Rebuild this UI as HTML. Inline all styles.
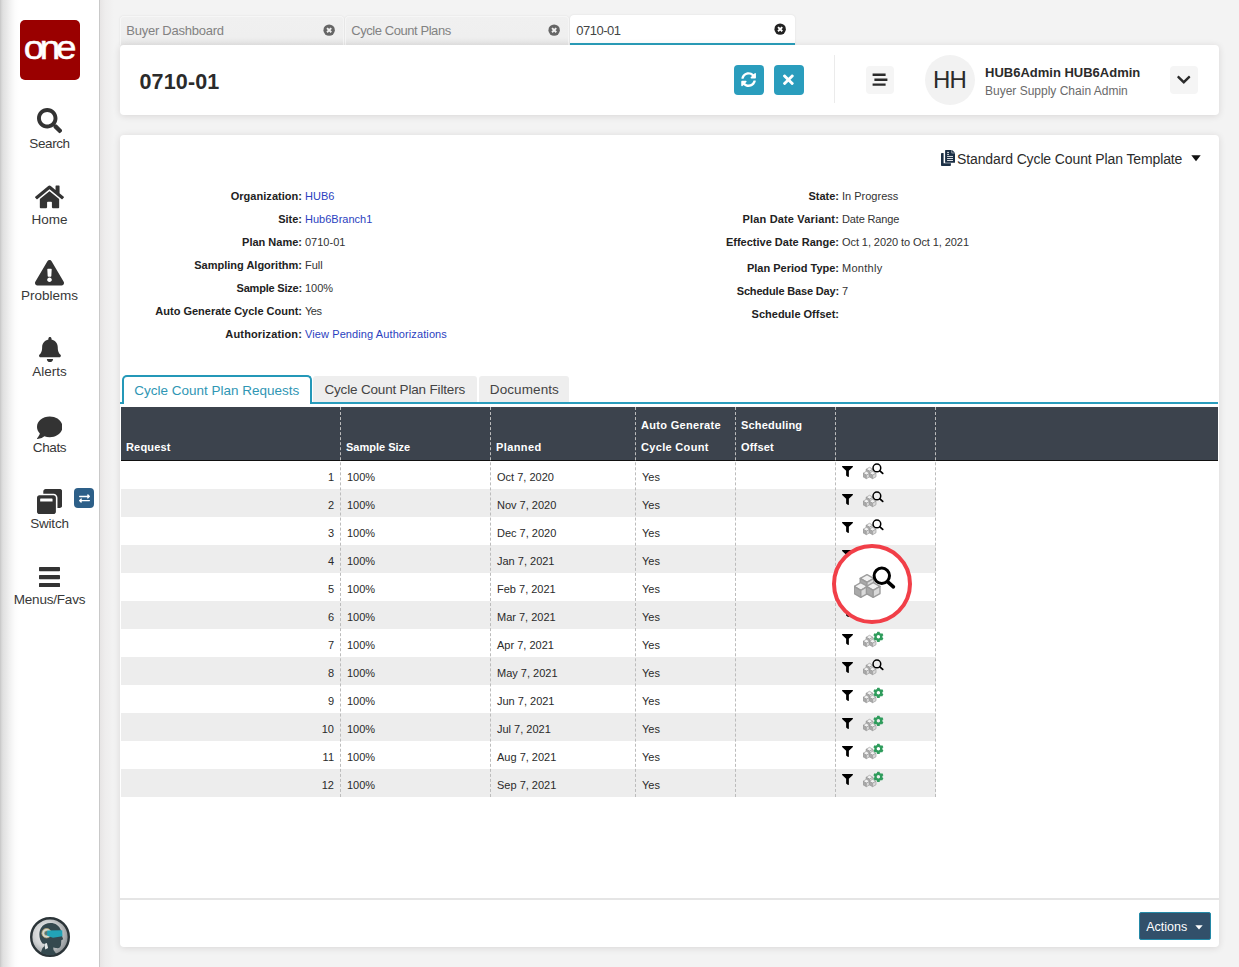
<!DOCTYPE html>
<html lang="en">
<head>
<meta charset="utf-8">
<title>0710-01</title>
<style>
*{box-sizing:border-box;margin:0;padding:0}
html,body{width:1239px;height:967px;overflow:hidden}
body{position:relative;background:#f3f3f3;font-family:"Liberation Sans",sans-serif;color:#333;font-size:12px}
.abs{position:absolute}
/* sidebar */
#side{position:absolute;left:0;top:0;width:100px;height:967px;background:linear-gradient(to right,#c6c6c6 0,#d6d6d6 1.500px,#e0e0e0 3px,#e7e7e7 6px,#efefef 9px,#f6f6f6 12px,#fcfcfc 15px,#fff 19px);border-right:1px solid #c9c9c9}
#sideshadow{position:absolute;left:100px;top:0;width:20px;height:967px;background:linear-gradient(to right,#e7e5e5 0,#eeeded 5px,#f3f3f3 14px)}
#logo{position:absolute;left:20px;top:20px;width:60px;height:60px;border-radius:5px;background:#9a0000;color:#fff;text-align:center}
#logo span{position:absolute;left:0;width:60px;top:9px;font-size:34px;letter-spacing:-4.050px;line-height:36px;text-indent:-4px;-webkit-text-stroke:.5px #fff;transform:scaleX(1.085);transform-origin:30px 50%}
.nav{position:absolute;left:0;width:99px;text-align:center;font-size:13.500px;color:#383838;line-height:16px;white-space:nowrap}
.nav svg{position:absolute}
/* top tabs */
.ttab{position:absolute;top:15.500px;height:29.500px;letter-spacing:-.25px;background:linear-gradient(to bottom,#f0f0f0 0,#efefef 70%,#e6e6e6 100%);border-radius:4px 4px 0 0;font-size:13px;color:#828282;line-height:28px;padding-left:5.300px;box-shadow:0 0 2px rgba(0,0,0,.10);border:1px solid #f6f6f6;border-bottom:none}
.ttab.act{top:15px;height:30px;background:#fff;color:#444;border:none;border-bottom:2px solid #2a9fbc;line-height:31px;padding-left:6.300px;letter-spacing:-.5px}.ttab.act .x{right:8.900px;top:8.100px}
.ttab .x{position:absolute;right:7.900px;top:7.600px;width:12.300px;height:12.300px}
/* cards */
.card{position:absolute;background:#fff;border-radius:4px;box-shadow:0 1px 7px rgba(40,20,20,.13)}
#title{position:absolute;left:139.500px;top:68px;font-size:21.500px;font-weight:bold;color:#2b2b2b;line-height:28px;letter-spacing:.15px;white-space:nowrap}
.btn{position:absolute;top:65px;width:30px;height:30px;border-radius:4px;background:#2a9dbd}
.gbtn{position:absolute;width:29px;height:29px;border-radius:4px;background:#f5f5f5}
/* form */
.lbl{position:absolute;font-weight:bold;font-size:11px;color:#222;text-align:right;line-height:14px;white-space:nowrap}
.val{position:absolute;font-size:11px;color:#333;line-height:14px;white-space:nowrap}
.val.lnk{color:#2b3fc0}
/* inner tabs */
.itab{position:absolute;top:376px;height:26px;background:#eeeeee;border-radius:3px 3px 0 0;font-size:13.500px;color:#444;line-height:28px;text-align:center;white-space:nowrap}
.itab.act{top:375px;background:#fff;color:#2f96b4;border:2px solid #2498b8;border-bottom:none;height:29px;line-height:27px;border-radius:5px 5px 0 0}
/* grid */
#ghead{position:absolute;left:121px;top:407px;width:1097px;height:54px;background:#3c434d;border-bottom:1px solid #111}
.th{position:absolute;color:#fff;font-weight:bold;font-size:11px;line-height:22px;white-space:nowrap}
.row{position:absolute;left:121px;width:815px;height:28px}
.row.alt{background:#ededed}
.c{position:absolute;top:9px;font-size:11px;line-height:14px;color:#2a2a2a;white-space:nowrap}
.vl{position:absolute;top:407px;width:0;height:390px;border-left:1px dashed #bcbcbc}
.ic{position:absolute}
</style>
</head>
<body>
<div id="side"></div>
<div id="sideshadow"></div>
<div id="logo"><span>one</span></div>

<!-- NAV -->
<svg class="abs" style="left:37px;top:108.4px" width="25.2" height="25.2" viewBox="0 0 512 512" preserveAspectRatio="none"><path fill="#333" d="M505 442.7L405.3 343c-4.500-4.500-10.600-7-17-7H372c27.600-35.300 44-79.700 44-128C416 93.100 322.900 0 208 0S0 93.100 0 208s93.100 208 208 208c48.300 0 92.700-16.400 128-44v16.300c0 6.400 2.500 12.500 7 17l99.700 99.700c9.400 9.400 24.600 9.400 33.900 0l28.300-28.300c9.400-9.400 9.400-24.600.1-34zM208 336c-70.700 0-128-57.200-128-128 0-70.700 57.200-128 128-128 70.700 0 128 57.200 128 128 0 70.700-57.200 128-128 128z"/></svg>
<div class="nav" style="top:136.100px;letter-spacing:-0.4px"><span>Search</span></div>
<svg class="abs" style="left:35px;top:183.8px" width="29" height="25.8" viewBox="0 0 576 512" preserveAspectRatio="none"><path fill="#333" d="M280.370 148.260L96 300.110V464a16 16 0 0 0 16 16l112.060-.29a16 16 0 0 0 15.920-16V368a16 16 0 0 1 16-16h64a16 16 0 0 1 16 16v95.640a16 16 0 0 0 16 16.050L464 480a16 16 0 0 0 16-16V300L295.670 148.260a12.190 12.190 0 0 0-15.300 0zM571.600 251.470L488 182.560V44.050a12 12 0 0 0-12-12h-56a12 12 0 0 0-12 12v72.610L318.470 43a48 48 0 0 0-61 0L4.340 251.470a12 12 0 0 0-1.600 16.900l25.500 31A12 12 0 0 0 45.150 301l235.220-193.740a12.190 12.190 0 0 1 15.300 0L530.900 301a12 12 0 0 0 16.900-1.600l25.500-31a12 12 0 0 0-1.700-16.930z"/></svg>
<div class="nav" style="top:211.85px;letter-spacing:0px"><span>Home</span></div>
<svg class="abs" style="left:35.2px;top:260.2px" width="29" height="25.4" viewBox="0 0 576 512" preserveAspectRatio="none"><path fill="#333" d="M569.517 440.013C587.975 472.007 564.806 512 527.940 512H48.054c-36.937 0-59.999-40.055-41.577-71.987L246.423 23.985c18.467-32.009 64.720-31.951 83.154 0l239.940 416.028zM288 354c-25.405 0-46 20.595-46 46s20.595 46 46 46 46-20.595 46-46-20.595-46-46-46zm-43.673-165.346l7.418 136c.347 6.364 5.609 11.346 11.982 11.346h48.546c6.373 0 11.635-4.982 11.982-11.346l7.418-136c.375-6.874-5.098-12.654-11.982-12.654h-63.383c-6.884 0-12.356 5.780-11.981 12.654z"/></svg>
<div class="nav" style="top:287.95px;letter-spacing:0px"><span>Problems</span></div>
<svg class="abs" style="left:38.7px;top:337px" width="21.9" height="25" viewBox="0 0 448 512" preserveAspectRatio="none"><path fill="#333" d="M224 512c35.320 0 63.970-28.650 63.970-64H160.030c0 35.350 28.650 64 63.970 64zm215.390-149.710c-19.320-20.760-55.470-51.990-55.470-154.290 0-77.700-54.480-139.900-127.940-155.160V32c0-17.670-14.320-32-31.980-32s-31.980 14.330-31.980 32v20.840C118.560 68.100 64.080 130.300 64.080 208c0 102.300-36.150 133.530-55.470 154.290-6 6.450-8.660 14.160-8.610 21.710.11 16.400 12.980 32 32.100 32h383.800c19.120 0 32-15.600 32.100-32 .05-7.550-2.610-15.270-8.610-21.710z"/></svg>
<div class="nav" style="top:363.95px;letter-spacing:0px"><span>Alerts</span></div>
<svg class="abs" style="left:36.5px;top:414.7px" width="25.5" height="25.5" viewBox="0 0 512 512" preserveAspectRatio="none"><path fill="#333" d="M256 32C114.600 32 0 125.100 0 240c0 49.600 21.400 95 57 130.700C44.500 421.100 2.700 466 2.200 466.500c-2.200 2.300-2.800 5.700-1.500 8.700S4.800 480 8 480c66.300 0 116-31.800 140.600-51.400 32.700 12.300 69 19.400 107.400 19.400 141.400 0 256-93.100 256-208S397.400 32 256 32z"/></svg>
<div class="nav" style="top:440.15px;letter-spacing:-0.38px"><span>Chats</span></div>
<svg class="abs" style="left:37px;top:488.7px" width="25.2" height="25.2" viewBox="0 0 512 512" preserveAspectRatio="none"><path fill="#333" d="M512 48v288c0 26.500-21.500 48-48 48h-48V176c0-44.100-35.900-80-80-80H128V48c0-26.500 21.500-48 48-48h288c26.500 0 48 21.500 48 48zM384 176v288c0 26.500-21.500 48-48 48H48c-26.500 0-48-21.500-48-48V176c0-26.500 21.500-48 48-48h288c26.500 0 48 21.500 48 48zm-68 28c0-6.600-5.400-12-12-12H76c-6.600 0-12 5.400-12 12v52h252v-52z"/></svg>
<div class="nav" style="top:515.75px;letter-spacing:-0.17px"><span>Switch</span></div>
<svg class="abs" style="left:39px;top:567px" width="21" height="20.300" viewBox="0 0 21 20.300"><path fill="#333" d="M.7 0h19.600a.7.7 0 0 1 .7.7v2.900a.7.7 0 0 1-.7.7H.7a.7.7 0 0 1-.7-.7V.7A.7.7 0 0 1 .7 0zM.7 7.950h19.600a.7.7 0 0 1 .7.7v2.900a.7.7 0 0 1-.7.7H.7a.7.7 0 0 1-.7-.7v-2.900a.7.7 0 0 1 .7-.7zM.7 15.900h19.600a.7.7 0 0 1 .7.7v2.900a.7.7 0 0 1-.7.7H.7a.7.7 0 0 1-.7-.7v-2.900a.7.7 0 0 1 .7-.7z"/></svg>
<div class="nav" style="top:591.85px;letter-spacing:-0.21px"><span>Menus/Favs</span></div>

<!-- TOP TABS -->
<div class="ttab" style="left:120px;width:224px">Buyer Dashboard<svg class="x" viewBox="0 0 14 14"><circle cx="7" cy="7" r="6.5" fill="#666"/><path d="M4.6 4.6l4.8 4.8M9.4 4.6l-4.8 4.8" stroke="#f0f0f0" stroke-width="2.1"/></svg></div>
<div class="ttab" style="left:345px;width:224px;letter-spacing:-.44px">Cycle Count Plans<svg class="x" viewBox="0 0 14 14"><circle cx="7" cy="7" r="6.5" fill="#666"/><path d="M4.6 4.6l4.8 4.8M9.4 4.6l-4.8 4.8" stroke="#f0f0f0" stroke-width="2.1"/></svg></div>
<div class="ttab act" style="left:570px;width:225px">0710-01<svg class="x" viewBox="0 0 14 14"><circle cx="7" cy="7" r="6.5" fill="#222"/><path d="M4.6 4.6l4.8 4.8M9.4 4.6l-4.8 4.8" stroke="#fff" stroke-width="2.1"/></svg></div>

<!-- HEADER CARD -->
<div class="card" style="left:120px;top:45px;width:1099px;height:70px"></div>
<div id="title">0710-01</div>


<!-- header controls -->
<div class="btn" style="left:734px"><svg class="abs" style="left:7.200px;top:6.800px" width="15.200" height="15.200" viewBox="0 0 512 512"><path fill="#fff" d="M370.720 133.280C339.458 104.008 298.888 87.962 255.848 88c-77.458.068-144.328 53.178-162.791 126.850-1.344 5.363-6.122 9.150-11.651 9.150H24.103c-7.498 0-13.194-6.807-11.807-14.176C33.933 94.924 134.813 8 256 8c66.448 0 126.791 26.136 171.315 68.685L463.030 40.970C478.149 25.851 504 36.559 504 57.941V192c0 13.255-10.745 24-24 24H345.941c-21.382 0-32.090-25.851-16.971-40.971l41.750-41.749zM32 296h134.059c21.382 0 32.090 25.851 16.971 40.971l-41.750 41.750c31.262 29.273 71.835 45.319 114.876 45.280 77.418-.07 144.315-53.144 162.787-126.849 1.344-5.363 6.122-9.150 11.651-9.150h57.304c7.498 0 13.194 6.807 11.807 14.176C478.067 417.076 377.187 504 256 504c-66.448 0-126.791-26.136-171.315-68.685L48.970 471.030C33.851 486.149 8 475.441 8 454.059V320c0-13.255 10.745-24 24-24z"/></svg></div>
<div class="btn" style="left:774px"><svg class="abs" style="left:9.200px;top:6.800px" width="10.800" height="15.400" viewBox="0 0 352 512" preserveAspectRatio="none"><path fill="#fff" d="M242.720 256l100.070-100.070c12.280-12.280 12.280-32.190 0-44.480l-22.240-22.240c-12.280-12.280-32.190-12.280-44.480 0L176 189.280 75.930 89.210c-12.280-12.280-32.190-12.280-44.480 0L9.210 111.450c-12.280 12.280-12.280 32.190 0 44.480L109.280 256 9.210 356.070c-12.280 12.280-12.280 32.190 0 44.480l22.240 22.240c12.280 12.280 32.200 12.280 44.480 0L176 322.720l100.070 100.070c12.280 12.280 32.200 12.280 44.480 0l22.240-22.240c12.280-12.280 12.280-32.190 0-44.480L242.720 256z"/></svg></div>
<div class="abs" style="left:834px;top:55px;width:1px;height:48px;background:#ebebeb"></div>
<div class="gbtn" style="left:865.500px;top:65.500px;width:28px;height:28px"><svg class="abs" style="left:0;top:0" width="28" height="28" viewBox="0 0 28 28"><path fill="#2b2b2b" d="M6.600 7.600h13v2.400h-13zM8.400 12.500h13v2.400h-13zM6.600 17.400h13v2.400h-13z"/></svg></div>
<div class="abs" id="avatar" style="left:925px;top:55px;width:50px;height:50px;border-radius:50%;background:#f2f2f2;text-align:center;line-height:50px;font-size:24px;color:#2b2b2b;letter-spacing:-.8px;text-indent:-.8px">HH</div>
<div class="abs" id="uname" style="left:985px;top:64.500px;font-size:13px;font-weight:bold;color:#2b2b2b;line-height:16px;white-space:nowrap">HUB6Admin HUB6Admin</div>
<div class="abs" id="urole" style="left:985px;top:84px;font-size:12px;color:#6a6a6a;line-height:15px;white-space:nowrap">Buyer Supply Chain Admin</div>
<div class="gbtn" style="left:1169.500px;top:65.500px;width:28.500px;height:28px"><svg class="abs" style="left:7.500px;top:6px" width="13.500" height="15.500" viewBox="0 0 448 512"><path fill="#2b2b2b" d="M207.029 381.476L12.686 187.132c-9.373-9.373-9.373-24.569 0-33.941l22.667-22.667c9.357-9.357 24.522-9.375 33.901-.04L224 284.505l154.745-154.021c9.379-9.335 24.544-9.317 33.901.04l22.667 22.667c9.373 9.373 9.373 24.569 0 33.941L240.971 381.476c-9.373 9.372-24.569 9.372-33.942 0z"/></svg></div>
<!-- switch badge -->
<div class="abs" style="left:74px;top:488.200px;width:20px;height:19.600px;border-radius:4px;background:#2d5f88"><svg class="abs" style="left:4.500px;top:4.500px" width="11" height="11" viewBox="0 0 512 512"><path fill="#fff" d="M0 168v-16c0-13.255 10.745-24 24-24h360V80c0-21.367 25.899-32.042 40.971-16.971l80 80c9.372 9.373 9.372 24.569 0 33.941l-80 80C409.956 271.982 384 261.456 384 240v-48H24c-13.255 0-24-10.745-24-24zm488 152H128v-48c0-21.314-25.862-32.080-40.971-16.971l-80 80c-9.372 9.373-9.372 24.569 0 33.941l80 80C102.057 463.997 128 453.437 128 432v-48h360c13.255 0 24-10.745 24-24v-16c0-13.255-10.745-24-24-24z"/></svg></div>

<!-- MAIN CARD -->
<div class="card" style="left:120px;top:135px;width:1099px;height:812px"></div>

<!-- form -->
<div class="lbl" style="left:102px;width:200px;top:189px;letter-spacing:0.03px">Organization:</div><div class="val lnk" style="left:305px;top:189px">HUB6</div>
<div class="lbl" style="left:102px;width:200px;top:212px">Site:</div><div class="val lnk" style="left:305px;top:212px">Hub6Branch1</div>
<div class="lbl" style="left:102px;width:200px;top:235px">Plan Name:</div><div class="val" style="left:305px;top:235px">0710-01</div>
<div class="lbl" style="left:102px;width:200px;top:258px">Sampling Algorithm:</div><div class="val" style="left:305px;top:258px">Full</div>
<div class="lbl" style="left:102px;width:200px;top:281px;letter-spacing:-0.2px">Sample Size:</div><div class="val" style="left:305px;top:281px">100%</div>
<div class="lbl" style="left:102px;width:200px;top:304px">Auto Generate Cycle Count:</div><div class="val" style="left:305px;top:304px;letter-spacing:-0.5px">Yes</div>
<div class="lbl" style="left:102px;width:200px;top:327px;letter-spacing:0.15px">Authorization:</div><div class="val lnk" style="left:305px;top:327px;letter-spacing:0.1px">View Pending Authorizations</div>
<div class="lbl" style="left:639px;width:200px;top:189px">State:</div><div class="val" style="left:842px;top:189px">In Progress</div>
<div class="lbl" style="left:639px;width:200px;top:212px;letter-spacing:0.16px">Plan Date Variant:</div><div class="val" style="left:842px;top:212px;letter-spacing:-0.16px">Date Range</div>
<div class="lbl" style="left:639px;width:200px;top:235px">Effective Date Range:</div><div class="val" style="left:842px;top:235px;letter-spacing:-0.08px">Oct 1, 2020 to Oct 1, 2021</div>
<div class="lbl" style="left:639px;width:200px;top:261px">Plan Period Type:</div><div class="val" style="left:842px;top:261px;letter-spacing:0.28px">Monthly</div>
<div class="lbl" style="left:639px;width:200px;top:284px;letter-spacing:-0.16px">Schedule Base Day:</div><div class="val" style="left:842px;top:284px">7</div>
<div class="lbl" style="left:639px;width:200px;top:307px">Schedule Offset:</div><div class="val" style="left:842px;top:307px"></div>
<svg class="abs" style="left:941px;top:150px" width="14" height="16" viewBox="0 0 14 16"><path fill="#1b2f45" d="M0 3.900a.8.8 0 0 1 .8-.8h1.800v10.200h7.300v1.900a.8.800 0 0 1-.8.800H.8a.8.800 0 0 1-.8-.8zM4.100.6a.5.500 0 0 1 .5-.5h6v3.200h3.400v9a.5.500 0 0 1-.5.500H4.600a.5.500 0 0 1-.5-.5zM11.100 0l2.900 2.700h-2.900z"/><path stroke="#fff" stroke-width=".85" d="M6.100 2.400h1.900M6.100 4.400h1.900M6.100 6.450h5.900M6.100 8.500h5.900M6.100 10.500h5.900"/></svg>
<div class="abs" id="tmpl" style="left:957px;top:150px;font-size:14px;letter-spacing:-.12px;color:#2b2b2b;line-height:18px;white-space:nowrap">Standard Cycle Count Plan Template</div>
<svg class="abs" style="left:1190.500px;top:155px" width="10" height="7" viewBox="0 0 10 7"><path d="M0.300 0.300h9.400L5 6.300z" fill="#111"/></svg>
<!-- inner tabs -->
<div class="abs" style="left:120px;top:402px;width:1098px;height:2px;background:#2a9dbd"></div>
<div class="itab act" style="left:122px;width:189.500px">Cycle Count Plan Requests</div>
<div class="itab" style="left:313px;width:163.500px;letter-spacing:-.175px">Cycle Count Plan Filters</div>
<div class="itab" style="left:479.300px;width:90.200px;letter-spacing:.1px">Documents</div>
<!-- grid -->
<div id="ghead"></div>
<div class="th" style="left:126px;top:436px;letter-spacing:0.18px">Request</div>
<div class="th" style="left:346px;top:436px">Sample Size</div>
<div class="th" style="left:496px;top:436px;letter-spacing:0.41px">Planned</div>
<div class="th" style="left:641px;top:414px;letter-spacing:0.32px">Auto Generate<br>Cycle Count</div>
<div class="th" style="left:741px;top:414px;letter-spacing:0.2px">Scheduling<br>Offset</div>
<div class="row" style="top:461px"><div class="c" style="left:0;width:213px;text-align:right">1</div><div class="c" style="left:226px">100%</div><div class="c" style="left:376px">Oct 7, 2020</div><div class="c" style="left:521px">Yes</div></div>
<div class="row alt" style="top:489px"><div class="c" style="left:0;width:213px;text-align:right">2</div><div class="c" style="left:226px">100%</div><div class="c" style="left:376px">Nov 7, 2020</div><div class="c" style="left:521px">Yes</div></div>
<div class="row" style="top:517px"><div class="c" style="left:0;width:213px;text-align:right">3</div><div class="c" style="left:226px">100%</div><div class="c" style="left:376px">Dec 7, 2020</div><div class="c" style="left:521px">Yes</div></div>
<div class="row alt" style="top:545px"><div class="c" style="left:0;width:213px;text-align:right">4</div><div class="c" style="left:226px">100%</div><div class="c" style="left:376px">Jan 7, 2021</div><div class="c" style="left:521px">Yes</div></div>
<div class="row" style="top:573px"><div class="c" style="left:0;width:213px;text-align:right">5</div><div class="c" style="left:226px">100%</div><div class="c" style="left:376px">Feb 7, 2021</div><div class="c" style="left:521px">Yes</div></div>
<div class="row alt" style="top:601px"><div class="c" style="left:0;width:213px;text-align:right">6</div><div class="c" style="left:226px">100%</div><div class="c" style="left:376px">Mar 7, 2021</div><div class="c" style="left:521px">Yes</div></div>
<div class="row" style="top:629px"><div class="c" style="left:0;width:213px;text-align:right">7</div><div class="c" style="left:226px">100%</div><div class="c" style="left:376px">Apr 7, 2021</div><div class="c" style="left:521px">Yes</div></div>
<div class="row alt" style="top:657px"><div class="c" style="left:0;width:213px;text-align:right">8</div><div class="c" style="left:226px">100%</div><div class="c" style="left:376px">May 7, 2021</div><div class="c" style="left:521px">Yes</div></div>
<div class="row" style="top:685px"><div class="c" style="left:0;width:213px;text-align:right">9</div><div class="c" style="left:226px">100%</div><div class="c" style="left:376px">Jun 7, 2021</div><div class="c" style="left:521px">Yes</div></div>
<div class="row alt" style="top:713px"><div class="c" style="left:0;width:213px;text-align:right">10</div><div class="c" style="left:226px">100%</div><div class="c" style="left:376px">Jul 7, 2021</div><div class="c" style="left:521px">Yes</div></div>
<div class="row" style="top:741px"><div class="c" style="left:0;width:213px;text-align:right">11</div><div class="c" style="left:226px">100%</div><div class="c" style="left:376px">Aug 7, 2021</div><div class="c" style="left:521px">Yes</div></div>
<div class="row alt" style="top:769px"><div class="c" style="left:0;width:213px;text-align:right">12</div><div class="c" style="left:226px">100%</div><div class="c" style="left:376px">Sep 7, 2021</div><div class="c" style="left:521px">Yes</div></div>
<div class="vl" style="left:340px"></div>
<div class="vl" style="left:490px"></div>
<div class="vl" style="left:635px"></div>
<div class="vl" style="left:735px"></div>
<div class="vl" style="left:835px"></div>
<div class="vl" style="left:935px"></div>

<svg class="ic" style="left:842px;top:465.8px" width="11" height="11" viewBox="0 0 512 512"><path fill="#000" d="M487.976 0H24.028C2.710 0-8.047 25.866 7.058 40.971L192 225.941V432c0 7.831 3.821 15.170 10.237 19.662l80 55.980C298.020 518.690 320 507.493 320 487.980V225.941l184.947-184.970C520.021 25.896 509.338 0 487.976 0z"/></svg><svg class="ic" style="left:863px;top:462.0px" width="21" height="18" viewBox="0 0 21 18"><path d="M6.5 5.3L9.9 7.22L6.5 9.14L3.1 7.22Z" fill="#f1f1f1" stroke="#9d9d9d" stroke-width=".7" stroke-linejoin="round"/><path d="M3.1 7.22L6.5 9.14L6.5 12.7L3.1 10.78Z" fill="#a9a9a9" stroke="#9a9a9a" stroke-width=".7" stroke-linejoin="round"/><path d="M9.9 7.22L6.5 9.14L6.5 12.7L9.9 10.78Z" fill="#dadada" stroke="#9d9d9d" stroke-width=".7" stroke-linejoin="round"/><path d="M3.4 9.3L6.8 11.22L3.4 13.14L0 11.22Z" fill="#f1f1f1" stroke="#9d9d9d" stroke-width=".7" stroke-linejoin="round"/><path d="M0 11.22L3.4 13.14L3.4 16.7L0 14.78Z" fill="#a9a9a9" stroke="#9a9a9a" stroke-width=".7" stroke-linejoin="round"/><path d="M6.8 11.22L3.4 13.14L3.4 16.7L6.8 14.78Z" fill="#dadada" stroke="#9d9d9d" stroke-width=".7" stroke-linejoin="round"/><path d="M9.6 9.3L13 11.22L9.6 13.14L6.2 11.22Z" fill="#f1f1f1" stroke="#9d9d9d" stroke-width=".7" stroke-linejoin="round"/><path d="M6.2 11.22L9.6 13.14L9.6 16.7L6.2 14.78Z" fill="#a9a9a9" stroke="#9a9a9a" stroke-width=".7" stroke-linejoin="round"/><path d="M13 11.22L9.6 13.14L9.6 16.7L13 14.78Z" fill="#dadada" stroke="#9d9d9d" stroke-width=".7" stroke-linejoin="round"/><circle cx="13.900" cy="5.900" r="3.850" fill="none" stroke="#000" stroke-width="1.500"/><path d="M16.900 8.900L19.700 11.400" stroke="#000" stroke-width="1.800" stroke-linecap="round"/></svg>
<svg class="ic" style="left:842px;top:493.8px" width="11" height="11" viewBox="0 0 512 512"><path fill="#000" d="M487.976 0H24.028C2.710 0-8.047 25.866 7.058 40.971L192 225.941V432c0 7.831 3.821 15.170 10.237 19.662l80 55.980C298.020 518.690 320 507.493 320 487.980V225.941l184.947-184.970C520.021 25.896 509.338 0 487.976 0z"/></svg><svg class="ic" style="left:863px;top:490.0px" width="21" height="18" viewBox="0 0 21 18"><path d="M6.5 5.3L9.9 7.22L6.5 9.14L3.1 7.22Z" fill="#f1f1f1" stroke="#9d9d9d" stroke-width=".7" stroke-linejoin="round"/><path d="M3.1 7.22L6.5 9.14L6.5 12.7L3.1 10.78Z" fill="#a9a9a9" stroke="#9a9a9a" stroke-width=".7" stroke-linejoin="round"/><path d="M9.9 7.22L6.5 9.14L6.5 12.7L9.9 10.78Z" fill="#dadada" stroke="#9d9d9d" stroke-width=".7" stroke-linejoin="round"/><path d="M3.4 9.3L6.8 11.22L3.4 13.14L0 11.22Z" fill="#f1f1f1" stroke="#9d9d9d" stroke-width=".7" stroke-linejoin="round"/><path d="M0 11.22L3.4 13.14L3.4 16.7L0 14.78Z" fill="#a9a9a9" stroke="#9a9a9a" stroke-width=".7" stroke-linejoin="round"/><path d="M6.8 11.22L3.4 13.14L3.4 16.7L6.8 14.78Z" fill="#dadada" stroke="#9d9d9d" stroke-width=".7" stroke-linejoin="round"/><path d="M9.6 9.3L13 11.22L9.6 13.14L6.2 11.22Z" fill="#f1f1f1" stroke="#9d9d9d" stroke-width=".7" stroke-linejoin="round"/><path d="M6.2 11.22L9.6 13.14L9.6 16.7L6.2 14.78Z" fill="#a9a9a9" stroke="#9a9a9a" stroke-width=".7" stroke-linejoin="round"/><path d="M13 11.22L9.6 13.14L9.6 16.7L13 14.78Z" fill="#dadada" stroke="#9d9d9d" stroke-width=".7" stroke-linejoin="round"/><circle cx="13.900" cy="5.900" r="3.850" fill="none" stroke="#000" stroke-width="1.500"/><path d="M16.900 8.900L19.700 11.400" stroke="#000" stroke-width="1.800" stroke-linecap="round"/></svg>
<svg class="ic" style="left:842px;top:521.8px" width="11" height="11" viewBox="0 0 512 512"><path fill="#000" d="M487.976 0H24.028C2.710 0-8.047 25.866 7.058 40.971L192 225.941V432c0 7.831 3.821 15.170 10.237 19.662l80 55.980C298.020 518.690 320 507.493 320 487.980V225.941l184.947-184.970C520.021 25.896 509.338 0 487.976 0z"/></svg><svg class="ic" style="left:863px;top:518.0px" width="21" height="18" viewBox="0 0 21 18"><path d="M6.5 5.3L9.9 7.22L6.5 9.14L3.1 7.22Z" fill="#f1f1f1" stroke="#9d9d9d" stroke-width=".7" stroke-linejoin="round"/><path d="M3.1 7.22L6.5 9.14L6.5 12.7L3.1 10.78Z" fill="#a9a9a9" stroke="#9a9a9a" stroke-width=".7" stroke-linejoin="round"/><path d="M9.9 7.22L6.5 9.14L6.5 12.7L9.9 10.78Z" fill="#dadada" stroke="#9d9d9d" stroke-width=".7" stroke-linejoin="round"/><path d="M3.4 9.3L6.8 11.22L3.4 13.14L0 11.22Z" fill="#f1f1f1" stroke="#9d9d9d" stroke-width=".7" stroke-linejoin="round"/><path d="M0 11.22L3.4 13.14L3.4 16.7L0 14.78Z" fill="#a9a9a9" stroke="#9a9a9a" stroke-width=".7" stroke-linejoin="round"/><path d="M6.8 11.22L3.4 13.14L3.4 16.7L6.8 14.78Z" fill="#dadada" stroke="#9d9d9d" stroke-width=".7" stroke-linejoin="round"/><path d="M9.6 9.3L13 11.22L9.6 13.14L6.2 11.22Z" fill="#f1f1f1" stroke="#9d9d9d" stroke-width=".7" stroke-linejoin="round"/><path d="M6.2 11.22L9.6 13.14L9.6 16.7L6.2 14.78Z" fill="#a9a9a9" stroke="#9a9a9a" stroke-width=".7" stroke-linejoin="round"/><path d="M13 11.22L9.6 13.14L9.6 16.7L13 14.78Z" fill="#dadada" stroke="#9d9d9d" stroke-width=".7" stroke-linejoin="round"/><circle cx="13.900" cy="5.900" r="3.850" fill="none" stroke="#000" stroke-width="1.500"/><path d="M16.900 8.900L19.700 11.400" stroke="#000" stroke-width="1.800" stroke-linecap="round"/></svg>
<svg class="ic" style="left:842px;top:549.8px" width="11" height="11" viewBox="0 0 512 512"><path fill="#000" d="M487.976 0H24.028C2.710 0-8.047 25.866 7.058 40.971L192 225.941V432c0 7.831 3.821 15.170 10.237 19.662l80 55.980C298.020 518.690 320 507.493 320 487.980V225.941l184.947-184.970C520.021 25.896 509.338 0 487.976 0z"/></svg><svg class="ic" style="left:863px;top:546.0px" width="21" height="18" viewBox="0 0 21 18"><path d="M6.5 5.3L9.9 7.22L6.5 9.14L3.1 7.22Z" fill="#f1f1f1" stroke="#9d9d9d" stroke-width=".7" stroke-linejoin="round"/><path d="M3.1 7.22L6.5 9.14L6.5 12.7L3.1 10.78Z" fill="#a9a9a9" stroke="#9a9a9a" stroke-width=".7" stroke-linejoin="round"/><path d="M9.9 7.22L6.5 9.14L6.5 12.7L9.9 10.78Z" fill="#dadada" stroke="#9d9d9d" stroke-width=".7" stroke-linejoin="round"/><path d="M3.4 9.3L6.8 11.22L3.4 13.14L0 11.22Z" fill="#f1f1f1" stroke="#9d9d9d" stroke-width=".7" stroke-linejoin="round"/><path d="M0 11.22L3.4 13.14L3.4 16.7L0 14.78Z" fill="#a9a9a9" stroke="#9a9a9a" stroke-width=".7" stroke-linejoin="round"/><path d="M6.8 11.22L3.4 13.14L3.4 16.7L6.8 14.78Z" fill="#dadada" stroke="#9d9d9d" stroke-width=".7" stroke-linejoin="round"/><path d="M9.6 9.3L13 11.22L9.6 13.14L6.2 11.22Z" fill="#f1f1f1" stroke="#9d9d9d" stroke-width=".7" stroke-linejoin="round"/><path d="M6.2 11.22L9.6 13.14L9.6 16.7L6.2 14.78Z" fill="#a9a9a9" stroke="#9a9a9a" stroke-width=".7" stroke-linejoin="round"/><path d="M13 11.22L9.6 13.14L9.6 16.7L13 14.78Z" fill="#dadada" stroke="#9d9d9d" stroke-width=".7" stroke-linejoin="round"/><circle cx="13.900" cy="5.900" r="3.850" fill="none" stroke="#000" stroke-width="1.500"/><path d="M16.900 8.900L19.700 11.400" stroke="#000" stroke-width="1.800" stroke-linecap="round"/></svg>
<svg class="ic" style="left:842px;top:577.8px" width="11" height="11" viewBox="0 0 512 512"><path fill="#000" d="M487.976 0H24.028C2.710 0-8.047 25.866 7.058 40.971L192 225.941V432c0 7.831 3.821 15.170 10.237 19.662l80 55.980C298.020 518.690 320 507.493 320 487.980V225.941l184.947-184.970C520.021 25.896 509.338 0 487.976 0z"/></svg><svg class="ic" style="left:863px;top:574.0px" width="21" height="18" viewBox="0 0 21 18"><path d="M6.5 5.3L9.9 7.22L6.5 9.14L3.1 7.22Z" fill="#f1f1f1" stroke="#9d9d9d" stroke-width=".7" stroke-linejoin="round"/><path d="M3.1 7.22L6.5 9.14L6.5 12.7L3.1 10.78Z" fill="#a9a9a9" stroke="#9a9a9a" stroke-width=".7" stroke-linejoin="round"/><path d="M9.9 7.22L6.5 9.14L6.5 12.7L9.9 10.78Z" fill="#dadada" stroke="#9d9d9d" stroke-width=".7" stroke-linejoin="round"/><path d="M3.4 9.3L6.8 11.22L3.4 13.14L0 11.22Z" fill="#f1f1f1" stroke="#9d9d9d" stroke-width=".7" stroke-linejoin="round"/><path d="M0 11.22L3.4 13.14L3.4 16.7L0 14.78Z" fill="#a9a9a9" stroke="#9a9a9a" stroke-width=".7" stroke-linejoin="round"/><path d="M6.8 11.22L3.4 13.14L3.4 16.7L6.8 14.78Z" fill="#dadada" stroke="#9d9d9d" stroke-width=".7" stroke-linejoin="round"/><path d="M9.6 9.3L13 11.22L9.6 13.14L6.2 11.22Z" fill="#f1f1f1" stroke="#9d9d9d" stroke-width=".7" stroke-linejoin="round"/><path d="M6.2 11.22L9.6 13.14L9.6 16.7L6.2 14.78Z" fill="#a9a9a9" stroke="#9a9a9a" stroke-width=".7" stroke-linejoin="round"/><path d="M13 11.22L9.6 13.14L9.6 16.7L13 14.78Z" fill="#dadada" stroke="#9d9d9d" stroke-width=".7" stroke-linejoin="round"/><circle cx="13.900" cy="5.900" r="3.850" fill="none" stroke="#000" stroke-width="1.500"/><path d="M16.900 8.900L19.700 11.400" stroke="#000" stroke-width="1.800" stroke-linecap="round"/></svg>
<svg class="ic" style="left:842px;top:605.8px" width="11" height="11" viewBox="0 0 512 512"><path fill="#000" d="M487.976 0H24.028C2.710 0-8.047 25.866 7.058 40.971L192 225.941V432c0 7.831 3.821 15.170 10.237 19.662l80 55.980C298.020 518.690 320 507.493 320 487.980V225.941l184.947-184.970C520.021 25.896 509.338 0 487.976 0z"/></svg><svg class="ic" style="left:863px;top:602.0px" width="21" height="18" viewBox="0 0 21 18"><path d="M6.5 5.3L9.9 7.22L6.5 9.14L3.1 7.22Z" fill="#f1f1f1" stroke="#9d9d9d" stroke-width=".7" stroke-linejoin="round"/><path d="M3.1 7.22L6.5 9.14L6.5 12.7L3.1 10.78Z" fill="#a9a9a9" stroke="#9a9a9a" stroke-width=".7" stroke-linejoin="round"/><path d="M9.9 7.22L6.5 9.14L6.5 12.7L9.9 10.78Z" fill="#dadada" stroke="#9d9d9d" stroke-width=".7" stroke-linejoin="round"/><path d="M3.4 9.3L6.8 11.22L3.4 13.14L0 11.22Z" fill="#f1f1f1" stroke="#9d9d9d" stroke-width=".7" stroke-linejoin="round"/><path d="M0 11.22L3.4 13.14L3.4 16.7L0 14.78Z" fill="#a9a9a9" stroke="#9a9a9a" stroke-width=".7" stroke-linejoin="round"/><path d="M6.8 11.22L3.4 13.14L3.4 16.7L6.8 14.78Z" fill="#dadada" stroke="#9d9d9d" stroke-width=".7" stroke-linejoin="round"/><path d="M9.6 9.3L13 11.22L9.6 13.14L6.2 11.22Z" fill="#f1f1f1" stroke="#9d9d9d" stroke-width=".7" stroke-linejoin="round"/><path d="M6.2 11.22L9.6 13.14L9.6 16.7L6.2 14.78Z" fill="#a9a9a9" stroke="#9a9a9a" stroke-width=".7" stroke-linejoin="round"/><path d="M13 11.22L9.6 13.14L9.6 16.7L13 14.78Z" fill="#dadada" stroke="#9d9d9d" stroke-width=".7" stroke-linejoin="round"/><circle cx="13.900" cy="5.900" r="3.850" fill="none" stroke="#000" stroke-width="1.500"/><path d="M16.900 8.900L19.700 11.400" stroke="#000" stroke-width="1.800" stroke-linecap="round"/></svg>
<svg class="ic" style="left:842px;top:633.8px" width="11" height="11" viewBox="0 0 512 512"><path fill="#000" d="M487.976 0H24.028C2.710 0-8.047 25.866 7.058 40.971L192 225.941V432c0 7.831 3.821 15.170 10.237 19.662l80 55.980C298.020 518.690 320 507.493 320 487.980V225.941l184.947-184.970C520.021 25.896 509.338 0 487.976 0z"/></svg><svg class="ic" style="left:863px;top:630.0px" width="21" height="18" viewBox="0 0 21 18"><path d="M6.5 5.3L9.9 7.22L6.5 9.14L3.1 7.22Z" fill="#f1f1f1" stroke="#9d9d9d" stroke-width=".7" stroke-linejoin="round"/><path d="M3.1 7.22L6.5 9.14L6.5 12.7L3.1 10.78Z" fill="#a9a9a9" stroke="#9a9a9a" stroke-width=".7" stroke-linejoin="round"/><path d="M9.9 7.22L6.5 9.14L6.5 12.7L9.9 10.78Z" fill="#dadada" stroke="#9d9d9d" stroke-width=".7" stroke-linejoin="round"/><path d="M3.4 9.3L6.8 11.22L3.4 13.14L0 11.22Z" fill="#f1f1f1" stroke="#9d9d9d" stroke-width=".7" stroke-linejoin="round"/><path d="M0 11.22L3.4 13.14L3.4 16.7L0 14.78Z" fill="#a9a9a9" stroke="#9a9a9a" stroke-width=".7" stroke-linejoin="round"/><path d="M6.8 11.22L3.4 13.14L3.4 16.7L6.8 14.78Z" fill="#dadada" stroke="#9d9d9d" stroke-width=".7" stroke-linejoin="round"/><path d="M9.6 9.3L13 11.22L9.6 13.14L6.2 11.22Z" fill="#f1f1f1" stroke="#9d9d9d" stroke-width=".7" stroke-linejoin="round"/><path d="M6.2 11.22L9.6 13.14L9.6 16.7L6.2 14.78Z" fill="#a9a9a9" stroke="#9a9a9a" stroke-width=".7" stroke-linejoin="round"/><path d="M13 11.22L9.6 13.14L9.6 16.7L13 14.78Z" fill="#dadada" stroke="#9d9d9d" stroke-width=".7" stroke-linejoin="round"/><svg x="10" y="1.400" width="10.800" height="10.800" viewBox="0 0 512 512"><path d="M487.400 315.700l-42.600-24.600c4.300-23.200 4.300-47 0-70.200l42.600-24.600c4.900-2.800 7.100-8.600 5.500-14-11.100-35.600-30-67.800-54.700-94.600-3.800-4.100-10-5.100-14.800-2.300L380.800 110c-17.900-15.400-38.500-27.300-60.800-35.100V25.800c0-5.600-3.900-10.500-9.400-11.700-36.700-8.200-74.300-7.800-109.200 0-5.500 1.200-9.400 6.100-9.400 11.700V75c-22.200 7.900-42.800 19.800-60.800 35.100L88.700 85.500c-4.900-2.800-11-1.900-14.800 2.300-24.700 26.700-43.600 58.900-54.700 94.600-1.700 5.400.6 11.200 5.500 14L67.300 221c-4.300 23.200-4.300 47 0 70.200l-42.600 24.600c-4.900 2.800-7.100 8.600-5.500 14 11.100 35.600 30 67.800 54.700 94.600 3.800 4.100 10 5.100 14.800 2.300l42.600-24.600c17.900 15.400 38.500 27.300 60.800 35.100v49.200c0 5.600 3.900 10.500 9.400 11.700 36.700 8.200 74.300 7.800 109.200 0 5.500-1.200 9.400-6.100 9.400-11.700v-49.200c22.200-7.900 42.800-19.800 60.800-35.100l42.600 24.600c4.900 2.800 11 1.900 14.800-2.300 24.700-26.700 43.600-58.900 54.700-94.600 1.500-5.500-.7-11.300-5.600-14.100zM256 336c-44.100 0-80-35.900-80-80s35.900-80 80-80 80 35.900 80 80-35.900 80-80 80z" fill="#2f9c5c"/></svg></svg>
<svg class="ic" style="left:842px;top:661.8px" width="11" height="11" viewBox="0 0 512 512"><path fill="#000" d="M487.976 0H24.028C2.710 0-8.047 25.866 7.058 40.971L192 225.941V432c0 7.831 3.821 15.170 10.237 19.662l80 55.980C298.020 518.690 320 507.493 320 487.980V225.941l184.947-184.970C520.021 25.896 509.338 0 487.976 0z"/></svg><svg class="ic" style="left:863px;top:658.0px" width="21" height="18" viewBox="0 0 21 18"><path d="M6.5 5.3L9.9 7.22L6.5 9.14L3.1 7.22Z" fill="#f1f1f1" stroke="#9d9d9d" stroke-width=".7" stroke-linejoin="round"/><path d="M3.1 7.22L6.5 9.14L6.5 12.7L3.1 10.78Z" fill="#a9a9a9" stroke="#9a9a9a" stroke-width=".7" stroke-linejoin="round"/><path d="M9.9 7.22L6.5 9.14L6.5 12.7L9.9 10.78Z" fill="#dadada" stroke="#9d9d9d" stroke-width=".7" stroke-linejoin="round"/><path d="M3.4 9.3L6.8 11.22L3.4 13.14L0 11.22Z" fill="#f1f1f1" stroke="#9d9d9d" stroke-width=".7" stroke-linejoin="round"/><path d="M0 11.22L3.4 13.14L3.4 16.7L0 14.78Z" fill="#a9a9a9" stroke="#9a9a9a" stroke-width=".7" stroke-linejoin="round"/><path d="M6.8 11.22L3.4 13.14L3.4 16.7L6.8 14.78Z" fill="#dadada" stroke="#9d9d9d" stroke-width=".7" stroke-linejoin="round"/><path d="M9.6 9.3L13 11.22L9.6 13.14L6.2 11.22Z" fill="#f1f1f1" stroke="#9d9d9d" stroke-width=".7" stroke-linejoin="round"/><path d="M6.2 11.22L9.6 13.14L9.6 16.7L6.2 14.78Z" fill="#a9a9a9" stroke="#9a9a9a" stroke-width=".7" stroke-linejoin="round"/><path d="M13 11.22L9.6 13.14L9.6 16.7L13 14.78Z" fill="#dadada" stroke="#9d9d9d" stroke-width=".7" stroke-linejoin="round"/><circle cx="13.900" cy="5.900" r="3.850" fill="none" stroke="#000" stroke-width="1.500"/><path d="M16.900 8.900L19.700 11.400" stroke="#000" stroke-width="1.800" stroke-linecap="round"/></svg>
<svg class="ic" style="left:842px;top:689.8px" width="11" height="11" viewBox="0 0 512 512"><path fill="#000" d="M487.976 0H24.028C2.710 0-8.047 25.866 7.058 40.971L192 225.941V432c0 7.831 3.821 15.170 10.237 19.662l80 55.980C298.020 518.690 320 507.493 320 487.980V225.941l184.947-184.970C520.021 25.896 509.338 0 487.976 0z"/></svg><svg class="ic" style="left:863px;top:686.0px" width="21" height="18" viewBox="0 0 21 18"><path d="M6.5 5.3L9.9 7.22L6.5 9.14L3.1 7.22Z" fill="#f1f1f1" stroke="#9d9d9d" stroke-width=".7" stroke-linejoin="round"/><path d="M3.1 7.22L6.5 9.14L6.5 12.7L3.1 10.78Z" fill="#a9a9a9" stroke="#9a9a9a" stroke-width=".7" stroke-linejoin="round"/><path d="M9.9 7.22L6.5 9.14L6.5 12.7L9.9 10.78Z" fill="#dadada" stroke="#9d9d9d" stroke-width=".7" stroke-linejoin="round"/><path d="M3.4 9.3L6.8 11.22L3.4 13.14L0 11.22Z" fill="#f1f1f1" stroke="#9d9d9d" stroke-width=".7" stroke-linejoin="round"/><path d="M0 11.22L3.4 13.14L3.4 16.7L0 14.78Z" fill="#a9a9a9" stroke="#9a9a9a" stroke-width=".7" stroke-linejoin="round"/><path d="M6.8 11.22L3.4 13.14L3.4 16.7L6.8 14.78Z" fill="#dadada" stroke="#9d9d9d" stroke-width=".7" stroke-linejoin="round"/><path d="M9.6 9.3L13 11.22L9.6 13.14L6.2 11.22Z" fill="#f1f1f1" stroke="#9d9d9d" stroke-width=".7" stroke-linejoin="round"/><path d="M6.2 11.22L9.6 13.14L9.6 16.7L6.2 14.78Z" fill="#a9a9a9" stroke="#9a9a9a" stroke-width=".7" stroke-linejoin="round"/><path d="M13 11.22L9.6 13.14L9.6 16.7L13 14.78Z" fill="#dadada" stroke="#9d9d9d" stroke-width=".7" stroke-linejoin="round"/><svg x="10" y="1.400" width="10.800" height="10.800" viewBox="0 0 512 512"><path d="M487.400 315.700l-42.600-24.600c4.300-23.200 4.300-47 0-70.200l42.600-24.600c4.900-2.800 7.100-8.600 5.500-14-11.100-35.600-30-67.800-54.700-94.600-3.800-4.100-10-5.100-14.800-2.300L380.800 110c-17.900-15.400-38.500-27.300-60.800-35.100V25.800c0-5.600-3.900-10.500-9.400-11.700-36.700-8.200-74.300-7.800-109.200 0-5.500 1.200-9.400 6.100-9.400 11.700V75c-22.200 7.900-42.800 19.800-60.800 35.100L88.700 85.500c-4.900-2.800-11-1.900-14.800 2.300-24.700 26.700-43.600 58.900-54.700 94.600-1.700 5.400.6 11.200 5.500 14L67.300 221c-4.300 23.200-4.300 47 0 70.200l-42.600 24.600c-4.900 2.800-7.100 8.600-5.500 14 11.100 35.600 30 67.800 54.700 94.600 3.800 4.100 10 5.100 14.800 2.300l42.600-24.600c17.900 15.400 38.500 27.300 60.800 35.100v49.200c0 5.600 3.900 10.500 9.400 11.700 36.700 8.200 74.300 7.800 109.200 0 5.500-1.200 9.400-6.100 9.400-11.700v-49.200c22.200-7.900 42.800-19.800 60.800-35.100l42.600 24.600c4.900 2.800 11 1.900 14.800-2.300 24.700-26.700 43.600-58.900 54.700-94.600 1.500-5.500-.7-11.300-5.600-14.100zM256 336c-44.100 0-80-35.900-80-80s35.900-80 80-80 80 35.900 80 80-35.900 80-80 80z" fill="#2f9c5c"/></svg></svg>
<svg class="ic" style="left:842px;top:717.8px" width="11" height="11" viewBox="0 0 512 512"><path fill="#000" d="M487.976 0H24.028C2.710 0-8.047 25.866 7.058 40.971L192 225.941V432c0 7.831 3.821 15.170 10.237 19.662l80 55.980C298.020 518.690 320 507.493 320 487.980V225.941l184.947-184.970C520.021 25.896 509.338 0 487.976 0z"/></svg><svg class="ic" style="left:863px;top:714.0px" width="21" height="18" viewBox="0 0 21 18"><path d="M6.5 5.3L9.9 7.22L6.5 9.14L3.1 7.22Z" fill="#f1f1f1" stroke="#9d9d9d" stroke-width=".7" stroke-linejoin="round"/><path d="M3.1 7.22L6.5 9.14L6.5 12.7L3.1 10.78Z" fill="#a9a9a9" stroke="#9a9a9a" stroke-width=".7" stroke-linejoin="round"/><path d="M9.9 7.22L6.5 9.14L6.5 12.7L9.9 10.78Z" fill="#dadada" stroke="#9d9d9d" stroke-width=".7" stroke-linejoin="round"/><path d="M3.4 9.3L6.8 11.22L3.4 13.14L0 11.22Z" fill="#f1f1f1" stroke="#9d9d9d" stroke-width=".7" stroke-linejoin="round"/><path d="M0 11.22L3.4 13.14L3.4 16.7L0 14.78Z" fill="#a9a9a9" stroke="#9a9a9a" stroke-width=".7" stroke-linejoin="round"/><path d="M6.8 11.22L3.4 13.14L3.4 16.7L6.8 14.78Z" fill="#dadada" stroke="#9d9d9d" stroke-width=".7" stroke-linejoin="round"/><path d="M9.6 9.3L13 11.22L9.6 13.14L6.2 11.22Z" fill="#f1f1f1" stroke="#9d9d9d" stroke-width=".7" stroke-linejoin="round"/><path d="M6.2 11.22L9.6 13.14L9.6 16.7L6.2 14.78Z" fill="#a9a9a9" stroke="#9a9a9a" stroke-width=".7" stroke-linejoin="round"/><path d="M13 11.22L9.6 13.14L9.6 16.7L13 14.78Z" fill="#dadada" stroke="#9d9d9d" stroke-width=".7" stroke-linejoin="round"/><svg x="10" y="1.400" width="10.800" height="10.800" viewBox="0 0 512 512"><path d="M487.400 315.700l-42.600-24.600c4.300-23.200 4.300-47 0-70.200l42.600-24.600c4.900-2.800 7.100-8.600 5.500-14-11.100-35.600-30-67.800-54.700-94.600-3.800-4.100-10-5.100-14.800-2.300L380.800 110c-17.900-15.400-38.500-27.300-60.800-35.100V25.800c0-5.600-3.900-10.500-9.400-11.700-36.700-8.200-74.300-7.800-109.200 0-5.500 1.200-9.400 6.100-9.400 11.700V75c-22.200 7.900-42.800 19.800-60.800 35.100L88.700 85.500c-4.900-2.800-11-1.900-14.800 2.300-24.700 26.700-43.600 58.900-54.700 94.600-1.700 5.400.6 11.200 5.500 14L67.300 221c-4.300 23.200-4.300 47 0 70.200l-42.600 24.600c-4.900 2.800-7.100 8.600-5.500 14 11.100 35.600 30 67.800 54.700 94.600 3.800 4.100 10 5.100 14.800 2.300l42.600-24.600c17.900 15.400 38.500 27.300 60.800 35.100v49.200c0 5.600 3.900 10.500 9.400 11.700 36.700 8.200 74.300 7.800 109.200 0 5.500-1.200 9.400-6.100 9.400-11.700v-49.200c22.200-7.900 42.800-19.800 60.800-35.100l42.600 24.600c4.900 2.800 11 1.900 14.800-2.300 24.700-26.700 43.600-58.900 54.700-94.600 1.500-5.500-.7-11.300-5.600-14.100zM256 336c-44.100 0-80-35.900-80-80s35.900-80 80-80 80 35.900 80 80-35.900 80-80 80z" fill="#2f9c5c"/></svg></svg>
<svg class="ic" style="left:842px;top:745.8px" width="11" height="11" viewBox="0 0 512 512"><path fill="#000" d="M487.976 0H24.028C2.710 0-8.047 25.866 7.058 40.971L192 225.941V432c0 7.831 3.821 15.170 10.237 19.662l80 55.980C298.020 518.690 320 507.493 320 487.980V225.941l184.947-184.970C520.021 25.896 509.338 0 487.976 0z"/></svg><svg class="ic" style="left:863px;top:742.0px" width="21" height="18" viewBox="0 0 21 18"><path d="M6.5 5.3L9.9 7.22L6.5 9.14L3.1 7.22Z" fill="#f1f1f1" stroke="#9d9d9d" stroke-width=".7" stroke-linejoin="round"/><path d="M3.1 7.22L6.5 9.14L6.5 12.7L3.1 10.78Z" fill="#a9a9a9" stroke="#9a9a9a" stroke-width=".7" stroke-linejoin="round"/><path d="M9.9 7.22L6.5 9.14L6.5 12.7L9.9 10.78Z" fill="#dadada" stroke="#9d9d9d" stroke-width=".7" stroke-linejoin="round"/><path d="M3.4 9.3L6.8 11.22L3.4 13.14L0 11.22Z" fill="#f1f1f1" stroke="#9d9d9d" stroke-width=".7" stroke-linejoin="round"/><path d="M0 11.22L3.4 13.14L3.4 16.7L0 14.78Z" fill="#a9a9a9" stroke="#9a9a9a" stroke-width=".7" stroke-linejoin="round"/><path d="M6.8 11.22L3.4 13.14L3.4 16.7L6.8 14.78Z" fill="#dadada" stroke="#9d9d9d" stroke-width=".7" stroke-linejoin="round"/><path d="M9.6 9.3L13 11.22L9.6 13.14L6.2 11.22Z" fill="#f1f1f1" stroke="#9d9d9d" stroke-width=".7" stroke-linejoin="round"/><path d="M6.2 11.22L9.6 13.14L9.6 16.7L6.2 14.78Z" fill="#a9a9a9" stroke="#9a9a9a" stroke-width=".7" stroke-linejoin="round"/><path d="M13 11.22L9.6 13.14L9.6 16.7L13 14.78Z" fill="#dadada" stroke="#9d9d9d" stroke-width=".7" stroke-linejoin="round"/><svg x="10" y="1.400" width="10.800" height="10.800" viewBox="0 0 512 512"><path d="M487.400 315.700l-42.600-24.600c4.300-23.200 4.300-47 0-70.200l42.600-24.600c4.900-2.800 7.100-8.600 5.500-14-11.100-35.600-30-67.800-54.700-94.600-3.800-4.100-10-5.100-14.800-2.300L380.800 110c-17.900-15.400-38.500-27.300-60.800-35.100V25.800c0-5.600-3.900-10.500-9.400-11.700-36.700-8.200-74.300-7.800-109.200 0-5.500 1.200-9.400 6.100-9.400 11.700V75c-22.200 7.900-42.800 19.800-60.800 35.100L88.700 85.500c-4.900-2.800-11-1.900-14.800 2.300-24.700 26.700-43.600 58.900-54.700 94.600-1.700 5.400.6 11.200 5.500 14L67.300 221c-4.300 23.200-4.300 47 0 70.200l-42.600 24.600c-4.900 2.800-7.100 8.600-5.500 14 11.100 35.600 30 67.800 54.700 94.600 3.800 4.100 10 5.100 14.800 2.300l42.600-24.600c17.900 15.400 38.500 27.300 60.800 35.100v49.200c0 5.600 3.900 10.500 9.400 11.700 36.700 8.200 74.300 7.800 109.200 0 5.500-1.200 9.400-6.100 9.400-11.700v-49.200c22.200-7.900 42.800-19.800 60.800-35.100l42.600 24.600c4.900 2.800 11 1.900 14.800-2.300 24.700-26.700 43.600-58.900 54.700-94.600 1.500-5.500-.7-11.300-5.600-14.100zM256 336c-44.100 0-80-35.900-80-80s35.900-80 80-80 80 35.900 80 80-35.900 80-80 80z" fill="#2f9c5c"/></svg></svg>
<svg class="ic" style="left:842px;top:773.8px" width="11" height="11" viewBox="0 0 512 512"><path fill="#000" d="M487.976 0H24.028C2.710 0-8.047 25.866 7.058 40.971L192 225.941V432c0 7.831 3.821 15.170 10.237 19.662l80 55.980C298.020 518.690 320 507.493 320 487.980V225.941l184.947-184.970C520.021 25.896 509.338 0 487.976 0z"/></svg><svg class="ic" style="left:863px;top:770.0px" width="21" height="18" viewBox="0 0 21 18"><path d="M6.5 5.3L9.9 7.22L6.5 9.14L3.1 7.22Z" fill="#f1f1f1" stroke="#9d9d9d" stroke-width=".7" stroke-linejoin="round"/><path d="M3.1 7.22L6.5 9.14L6.5 12.7L3.1 10.78Z" fill="#a9a9a9" stroke="#9a9a9a" stroke-width=".7" stroke-linejoin="round"/><path d="M9.9 7.22L6.5 9.14L6.5 12.7L9.9 10.78Z" fill="#dadada" stroke="#9d9d9d" stroke-width=".7" stroke-linejoin="round"/><path d="M3.4 9.3L6.8 11.22L3.4 13.14L0 11.22Z" fill="#f1f1f1" stroke="#9d9d9d" stroke-width=".7" stroke-linejoin="round"/><path d="M0 11.22L3.4 13.14L3.4 16.7L0 14.78Z" fill="#a9a9a9" stroke="#9a9a9a" stroke-width=".7" stroke-linejoin="round"/><path d="M6.8 11.22L3.4 13.14L3.4 16.7L6.8 14.78Z" fill="#dadada" stroke="#9d9d9d" stroke-width=".7" stroke-linejoin="round"/><path d="M9.6 9.3L13 11.22L9.6 13.14L6.2 11.22Z" fill="#f1f1f1" stroke="#9d9d9d" stroke-width=".7" stroke-linejoin="round"/><path d="M6.2 11.22L9.6 13.14L9.6 16.7L6.2 14.78Z" fill="#a9a9a9" stroke="#9a9a9a" stroke-width=".7" stroke-linejoin="round"/><path d="M13 11.22L9.6 13.14L9.6 16.7L13 14.78Z" fill="#dadada" stroke="#9d9d9d" stroke-width=".7" stroke-linejoin="round"/><svg x="10" y="1.400" width="10.800" height="10.800" viewBox="0 0 512 512"><path d="M487.400 315.700l-42.600-24.600c4.300-23.200 4.300-47 0-70.200l42.600-24.600c4.900-2.800 7.100-8.600 5.500-14-11.100-35.600-30-67.800-54.700-94.600-3.800-4.100-10-5.100-14.800-2.300L380.800 110c-17.900-15.400-38.500-27.300-60.800-35.100V25.800c0-5.600-3.900-10.500-9.400-11.700-36.700-8.200-74.300-7.800-109.200 0-5.500 1.200-9.400 6.100-9.400 11.700V75c-22.200 7.900-42.800 19.800-60.800 35.100L88.700 85.500c-4.900-2.800-11-1.900-14.800 2.300-24.700 26.700-43.600 58.900-54.700 94.600-1.700 5.400.6 11.200 5.500 14L67.300 221c-4.300 23.200-4.300 47 0 70.200l-42.600 24.600c-4.900 2.800-7.100 8.600-5.500 14 11.100 35.600 30 67.800 54.700 94.600 3.800 4.100 10 5.100 14.800 2.300l42.600-24.600c17.900 15.400 38.500 27.300 60.800 35.100v49.200c0 5.600 3.900 10.500 9.400 11.700 36.700 8.200 74.300 7.800 109.200 0 5.500-1.200 9.400-6.100 9.400-11.700v-49.200c22.200-7.900 42.800-19.800 60.800-35.100l42.600 24.600c4.900 2.800 11 1.900 14.800-2.300 24.700-26.700 43.600-58.900 54.700-94.600 1.500-5.500-.7-11.300-5.600-14.100zM256 336c-44.100 0-80-35.900-80-80s35.900-80 80-80 80 35.900 80 80-35.900 80-80 80z" fill="#2f9c5c"/></svg></svg>
<div class="abs" id="mag" style="left:832px;top:544px;width:80px;height:80px;border-radius:50%;background:#fff;border:4px solid #f13f48"><svg class="abs" style="left:18px;top:16px" width="42" height="36" viewBox="0 0 21 18"><path d="M6.5 5.3L9.9 7.22L6.5 9.14L3.1 7.22Z" fill="#f1f1f1" stroke="#9d9d9d" stroke-width=".7" stroke-linejoin="round"/><path d="M3.1 7.22L6.5 9.14L6.5 12.7L3.1 10.78Z" fill="#a9a9a9" stroke="#9a9a9a" stroke-width=".7" stroke-linejoin="round"/><path d="M9.9 7.22L6.5 9.14L6.5 12.7L9.9 10.78Z" fill="#dadada" stroke="#9d9d9d" stroke-width=".7" stroke-linejoin="round"/><path d="M3.4 9.3L6.8 11.22L3.4 13.14L0 11.22Z" fill="#f1f1f1" stroke="#9d9d9d" stroke-width=".7" stroke-linejoin="round"/><path d="M0 11.22L3.4 13.14L3.4 16.7L0 14.78Z" fill="#a9a9a9" stroke="#9a9a9a" stroke-width=".7" stroke-linejoin="round"/><path d="M6.8 11.22L3.4 13.14L3.4 16.7L6.8 14.78Z" fill="#dadada" stroke="#9d9d9d" stroke-width=".7" stroke-linejoin="round"/><path d="M9.6 9.3L13 11.22L9.6 13.14L6.2 11.22Z" fill="#f1f1f1" stroke="#9d9d9d" stroke-width=".7" stroke-linejoin="round"/><path d="M6.2 11.22L9.6 13.14L9.6 16.7L6.2 14.78Z" fill="#a9a9a9" stroke="#9a9a9a" stroke-width=".7" stroke-linejoin="round"/><path d="M13 11.22L9.6 13.14L9.6 16.7L13 14.78Z" fill="#dadada" stroke="#9d9d9d" stroke-width=".7" stroke-linejoin="round"/><circle cx="13.900" cy="5.900" r="3.850" fill="none" stroke="#000" stroke-width="1.500"/><path d="M16.900 8.900L19.700 11.400" stroke="#000" stroke-width="1.800" stroke-linecap="round"/></svg></div>
<svg class="abs" style="left:30px;top:917px" width="40" height="40" viewBox="0 0 40 40"><defs><radialGradient id="rg" cx="40%" cy="42%" r="62%"><stop offset="0" stop-color="#f6f6f6"/><stop offset=".55" stop-color="#cfd1d2"/><stop offset="1" stop-color="#8a8f92"/></radialGradient><clipPath id="rc"><circle cx="20" cy="20" r="18.200"/></clipPath></defs><circle cx="20" cy="20" r="18.800" fill="url(#rg)" stroke="#2b3438" stroke-width="2.400"/><g clip-path="url(#rc)"><path d="M12.500 26.500C9 22.500 8.300 15.500 11 11c3-5 11-6.500 16-3 3.500 2.500 4.600 6 4.600 10l1.600 4.300-1.900 1-.2 3.700c-.2 3.400-2.100 4.600-5.100 4l-2.800-.5.300 2.500 4 5.500c-5.500 2-12.500 1.500-17-2l2-5.500c1.500-1 2.500-2.500 2-4z" fill="#35494f"/><path d="M14.600 26.800l2.300-.9 1.200 5.200-2.800 1.500c-.6-2-.7-4-.7-5.800z" fill="#e4e8e8"/><circle cx="16.600" cy="16.200" r="4.700" fill="#d5dada" stroke="#b9a66e" stroke-width=".8"/><circle cx="16.600" cy="16.200" r="2.500" fill="#55787c" stroke="#d9c98e" stroke-width=".7"/><path d="M17.200 13.600l15-.3.300 6-9.500 1.400-5.800-1.900z" fill="#22a3b6"/></g></svg>
<!-- footer -->
<div class="abs" style="left:120px;top:898px;width:1099px;height:2px;background:#e5e5e5"></div>
<div class="abs" id="actions" style="left:1139px;top:912px;width:72px;height:28px;background:#32506a;border:1px solid #2489a7;border-radius:2px;color:#fff;font-size:12.500px;line-height:28px;padding-left:6.200px;white-space:nowrap">Actions<svg class="abs" style="left:55px;top:12px" width="8" height="5" viewBox="0 0 8 5"><path d="M.3 .2h7.400L4 4.600z" fill="#fff"/></svg></div>
</body>
</html>
